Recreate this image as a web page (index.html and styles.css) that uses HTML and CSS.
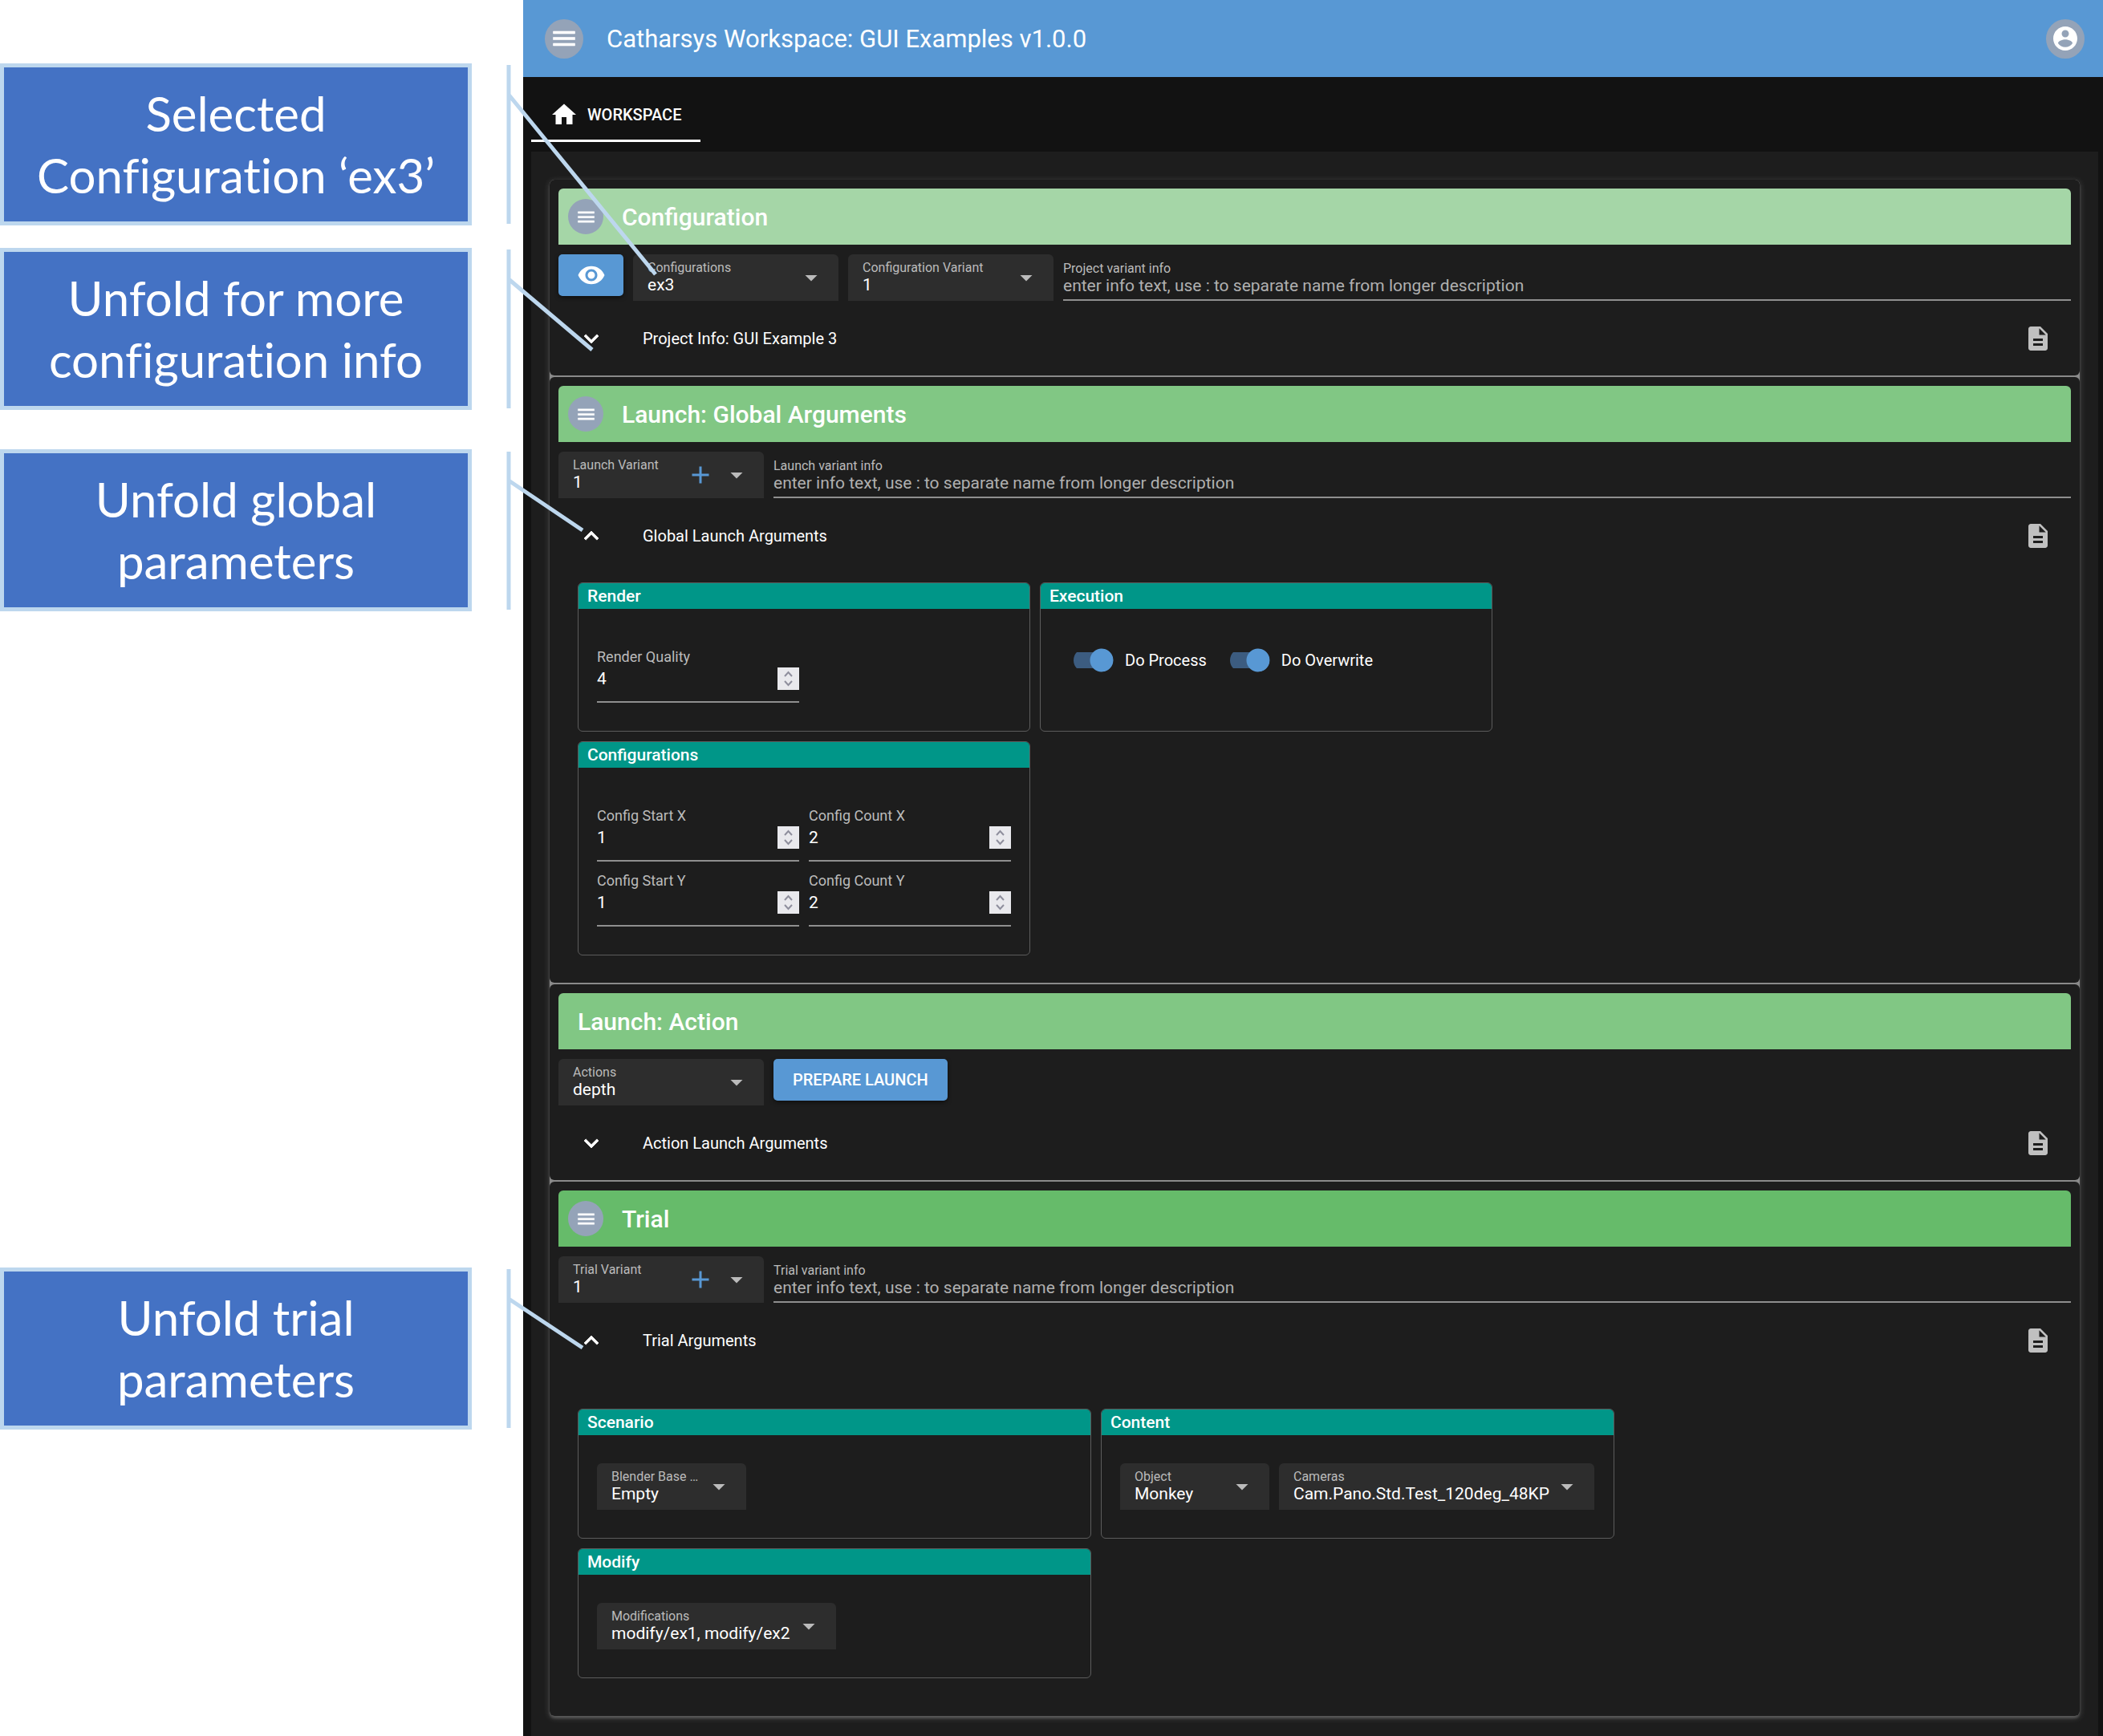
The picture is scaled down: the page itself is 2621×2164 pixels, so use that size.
FILE: index.html
```html
<!DOCTYPE html>
<html lang="en">
<head>
<meta charset="utf-8">
<title>Catharsys Workspace</title>
<link rel="stylesheet" href="styles.css">
</head>
<body>
<svg class="sprite" aria-hidden="true">
  <symbol id="menu" viewBox="0 0 24 24"><path d="M3 18h18v-2H3v2zm0-5h18v-2H3v2zm0-7v2h18V6H3z" stroke="currentColor" stroke-width=".4"/></symbol>
  <symbol id="account" viewBox="0 0 24 24"><path d="M12 2C6.48 2 2 6.48 2 12s4.48 10 10 10 10-4.48 10-10S17.52 2 12 2zm0 3c1.66 0 3 1.34 3 3s-1.34 3-3 3-3-1.34-3-3 1.34-3 3-3zm0 14.2c-2.5 0-4.71-1.28-6-3.22.03-1.99 4-3.08 6-3.08 1.99 0 5.97 1.09 6 3.08-1.29 1.94-3.5 3.22-6 3.22z"/></symbol>
  <symbol id="home" viewBox="0 0 24 24"><path d="M10 20v-6h4v6h5v-8h3L12 3 2 12h3v8z"/></symbol>
  <symbol id="eye" viewBox="0 0 24 24"><path d="M12 4.500C7 4.500 2.730 7.610 1 12c1.730 4.390 6 7.500 11 7.500s9.270-3.110 11-7.500c-1.730-4.390-6-7.500-11-7.500zM12 17c-2.760 0-5-2.240-5-5s2.240-5 5-5 5 2.240 5 5-2.240 5-5 5zm0-8c-1.660 0-3 1.340-3 3s1.340 3 3 3 3-1.340 3-3-1.340-3-3-3z"/></symbol>
  <symbol id="down" viewBox="0 0 24 24"><path d="M7.410 8.590 12 13.170l4.590-4.580L18 10l-6 6-6-6z" stroke="currentColor" stroke-width=".5"/></symbol>
  <symbol id="up" viewBox="0 0 24 24"><path d="M7.410 15.410 12 10.830l4.590 4.580L18 14l-6-6-6 6z" stroke="currentColor" stroke-width=".5"/></symbol>
  <symbol id="doc" viewBox="0 0 24 24"><path d="M14 2H6c-1.100 0-1.990.9-1.990 2L4 20c0 1.100.890 2 1.990 2H18c1.100 0 2-.9 2-2V8l-6-6zm2 16H8v-2h8v2zm0-4H8v-2h8v2zm-3-5V3.500L18.500 9H13z"/></symbol>
  <symbol id="caret" viewBox="0 0 24 24"><path d="M7 10l5 5 5-5z"/></symbol>
  <symbol id="plus" viewBox="0 0 24 24"><path d="M19 13h-6v6h-2v-6H5v-2h6V5h2v6h6v2z"/></symbol>
  <symbol id="spin" viewBox="0 0 27 28"><path d="M9 11l4.500-5 4.500 5M9 17l4.500 5 4.500-5" fill="none" stroke="#8f8f9d" stroke-width="2"/></symbol>
</svg>

<div class="page">
  <aside class="notes">
    <p class="note">Selected<br>Configuration ‘ex3’</p>
    <p class="note">Unfold for more<br>configuration info</p>
    <p class="note note-global">Unfold global<br>parameters</p>
    <p class="note note-trial">Unfold trial<br>parameters</p>
  </aside>

  <div class="app">
    <header class="topbar">
      <button class="round" type="button" aria-label="Menu"><svg class="icon"><use href="#menu"/></svg></button>
      <h1 class="app-title">Catharsys Workspace: GUI Examples v1.0.0</h1>
      <button class="round" type="button" aria-label="Account"><svg class="icon"><use href="#account"/></svg></button>
    </header>

    <nav class="tabs">
      <a class="tab" href="#workspace"><svg class="icon"><use href="#home"/></svg>WORKSPACE</a>
    </nav>

    <main class="panel" id="workspace">
      <div class="stack">

        <section class="section">
          <header class="bar bar-light">
            <button class="round round-small" type="button" aria-label="Configuration menu"><svg class="icon icon-small"><use href="#menu"/></svg></button>
            <h2 class="bar-title">Configuration</h2>
          </header>
          <div class="row">
            <button class="btn btn-eye" type="button" aria-label="View"><svg class="icon"><use href="#eye"/></svg></button>
            <div class="select">
              <div class="select-main"><label for="cfg">Configurations</label><select id="cfg"><option>ex3</option></select></div>
              <svg class="icon"><use href="#caret"/></svg>
            </div>
            <div class="select">
              <div class="select-main"><label for="cfgv">Configuration Variant</label><select id="cfgv"><option>1</option></select></div>
              <svg class="icon"><use href="#caret"/></svg>
            </div>
            <div class="info"><label for="pinfo">Project variant info</label><input id="pinfo" type="text" placeholder="enter info text, use : to separate name from longer description"></div>
          </div>
          <div class="fold">
            <button class="fold-toggle" type="button"><svg class="icon"><use href="#down"/></svg>Project Info: GUI Example 3</button>
            <svg class="icon doc"><use href="#doc"/></svg>
          </div>
        </section>

        <section class="section">
          <header class="bar bar-mid">
            <button class="round round-small" type="button" aria-label="Launch menu"><svg class="icon icon-small"><use href="#menu"/></svg></button>
            <h2 class="bar-title">Launch: Global Arguments</h2>
          </header>
          <div class="row">
            <div class="select">
              <div class="select-main"><label for="lv">Launch Variant</label><select id="lv"><option>1</option></select></div>
              <button class="add" type="button" aria-label="Add launch variant"><svg class="icon"><use href="#plus"/></svg></button>
              <svg class="icon"><use href="#caret"/></svg>
            </div>
            <div class="info"><label for="linfo">Launch variant info</label><input id="linfo" type="text" placeholder="enter info text, use : to separate name from longer description"></div>
          </div>
          <div class="fold">
            <button class="fold-toggle" type="button"><svg class="icon"><use href="#up"/></svg>Global Launch Arguments</button>
            <svg class="icon doc"><use href="#doc"/></svg>
          </div>
          <div class="groups">
            <div class="group">
              <h3 class="group-title">Render</h3>
              <div class="group-body numbers">
                <div class="number"><label for="rq">Render Quality</label><div class="number-line"><input id="rq" type="number" value="4"><svg class="spin"><use href="#spin"/></svg></div></div>
              </div>
            </div>
            <div class="group">
              <h3 class="group-title">Execution</h3>
              <div class="group-body switches">
                <label class="switch"><input type="checkbox" checked>Do Process</label>
                <label class="switch"><input type="checkbox" checked>Do Overwrite</label>
              </div>
            </div>
            <div class="group">
              <h3 class="group-title">Configurations</h3>
              <div class="group-body numbers">
                <div class="number"><label for="sx">Config Start X</label><div class="number-line"><input id="sx" type="number" value="1"><svg class="spin"><use href="#spin"/></svg></div></div>
                <div class="number"><label for="cx">Config Count X</label><div class="number-line"><input id="cx" type="number" value="2"><svg class="spin"><use href="#spin"/></svg></div></div>
                <div class="number"><label for="sy">Config Start Y</label><div class="number-line"><input id="sy" type="number" value="1"><svg class="spin"><use href="#spin"/></svg></div></div>
                <div class="number"><label for="cy">Config Count Y</label><div class="number-line"><input id="cy" type="number" value="2"><svg class="spin"><use href="#spin"/></svg></div></div>
              </div>
            </div>
          </div>
        </section>

        <section class="section">
          <header class="bar bar-mid">
            <h2 class="bar-title bar-title-plain">Launch: Action</h2>
          </header>
          <div class="row">
            <div class="select">
              <div class="select-main"><label for="act">Actions</label><select id="act"><option>depth</option></select></div>
              <svg class="icon"><use href="#caret"/></svg>
            </div>
            <button class="btn" type="button">PREPARE LAUNCH</button>
          </div>
          <div class="fold">
            <button class="fold-toggle" type="button"><svg class="icon"><use href="#down"/></svg>Action Launch Arguments</button>
            <svg class="icon doc"><use href="#doc"/></svg>
          </div>
        </section>

        <section class="section">
          <header class="bar bar-deep">
            <button class="round round-small" type="button" aria-label="Trial menu"><svg class="icon icon-small"><use href="#menu"/></svg></button>
            <h2 class="bar-title">Trial</h2>
          </header>
          <div class="row">
            <div class="select">
              <div class="select-main"><label for="tv">Trial Variant</label><select id="tv"><option>1</option></select></div>
              <button class="add" type="button" aria-label="Add trial variant"><svg class="icon"><use href="#plus"/></svg></button>
              <svg class="icon"><use href="#caret"/></svg>
            </div>
            <div class="info"><label for="tinfo">Trial variant info</label><input id="tinfo" type="text" placeholder="enter info text, use : to separate name from longer description"></div>
          </div>
          <div class="fold">
            <button class="fold-toggle" type="button"><svg class="icon"><use href="#up"/></svg>Trial Arguments</button>
            <svg class="icon doc"><use href="#doc"/></svg>
          </div>
          <div class="groups groups-wide">
            <div class="group">
              <h3 class="group-title">Scenario</h3>
              <div class="group-body picks">
                <div class="select select-s">
                  <div class="select-main"><label for="bl">Blender Base …</label><select id="bl"><option>Empty</option></select></div>
                  <svg class="icon"><use href="#caret"/></svg>
                </div>
              </div>
            </div>
            <div class="group">
              <h3 class="group-title">Content</h3>
              <div class="group-body picks">
                <div class="select select-s">
                  <div class="select-main"><label for="ob">Object</label><select id="ob"><option>Monkey</option></select></div>
                  <svg class="icon"><use href="#caret"/></svg>
                </div>
                <div class="select select-l">
                  <div class="select-main"><label for="cam">Cameras</label><select id="cam"><option>Cam.Pano.Std.Test_120deg_48KP</option></select></div>
                  <svg class="icon"><use href="#caret"/></svg>
                </div>
              </div>
            </div>
            <div class="group">
              <h3 class="group-title">Modify</h3>
              <div class="group-body picks">
                <div class="select select-m">
                  <div class="select-main"><label for="mod">Modifications</label><select id="mod"><option>modify/ex1, modify/ex2</option></select></div>
                  <svg class="icon"><use href="#caret"/></svg>
                </div>
              </div>
            </div>
          </div>
        </section>

      </div>
    </main>
  </div>

  <!-- Leader lines from the notes to the controls they explain -->
  <svg class="leaders" width="840" height="1800" viewBox="0 0 840 1800" aria-hidden="true">
    <path d="M634 81V279M634 118L817 342M634 311V509M634 348L738 436M634 563V760M634 599L726 661M634 1582V1780M634 1619L726 1680"/>
  </svg>
</div>
</body>
</html>
```
FILE: styles.css
```css
* { box-sizing: border-box; }

body {
  margin: 0;
  background: #fff;
  color: #fff;
  font: 400 21px/24px Roboto, sans-serif;
}

h1, h2, h3, p { margin: 0; }

button, input, select {
  margin: 0;
  padding: 0;
  border: 0;
  background: none;
  color: inherit;
  font: inherit;
  appearance: none;
}

.sprite { display: none; }

.icon {
  flex: none;
  width: 36px;
  height: 36px;
  fill: currentColor;
}

.icon-small { width: 27px; height: 27px; }

.page {
  position: relative;
  display: flex;
  min-height: 100vh;
}

/* Notes beside the application */
.notes {
  flex: none;
  width: 652px;
  padding-top: 79px;
}

.note {
  display: flex;
  align-items: center;
  justify-content: center;
  width: 588px;
  height: 202px;
  margin-bottom: 28px;
  border: 5px solid #bdd7ee;
  background: #4472c4;
  font: 400 60px/77px Lato, sans-serif;
  font-variant-ligatures: none;
  text-align: center;
}

.note-global { margin-top: 49px; }
.note-trial { margin-top: 818px; }

.leaders {
  position: absolute;
  top: 0;
  left: 0;
  fill: none;
  stroke: #bdd7ee;
  stroke-width: 5px;
  pointer-events: none;
}

/* Application frame */
.app {
  flex: 1;
  min-width: 0;
  display: flex;
  flex-direction: column;
  background: #121212;
}

.topbar {
  display: flex;
  align-items: center;
  height: 96px;
  padding: 0 23px 0 27px;
  background: #5898d4;
}

.app-title {
  flex: 1;
  padding: 2px 0 0 29px;
  font-size: 31px;
  font-weight: 400;
  line-height: 40px;
}

.round {
  display: flex;
  flex: none;
  align-items: center;
  justify-content: center;
  width: 48px;
  height: 49px;
  border-radius: 50%;
  background: #94a3b8;
}

.round-small { width: 44px; height: 44px; }

.tabs {
  display: flex;
  padding: 9px 10px 12px;
}

.tab {
  display: flex;
  align-items: center;
  gap: 11px;
  height: 72px;
  padding: 3px 24px 0 23px;
  box-shadow: inset 0 -3px #fff;
  color: #fff;
  font-size: 20px;
  font-weight: 500;
  text-decoration: none;
}

.panel {
  flex: 1;
  margin: 0 6px 0 10px;
  padding: 35px 23px 24px;
  background: #1d1d1d;
}

.stack {
  display: flex;
  flex-direction: column;
  gap: 2px;
  border-radius: 6px;
  background: #8a8a8a;
  box-shadow: 0 2px 8px rgba(255, 255, 255, .2), 0 3px 3px rgba(255, 255, 255, .16);
}

.section {
  padding: 11px;
  border-radius: 6px;
  background: #1d1d1d;
}

.bar {
  display: flex;
  align-items: center;
  height: 70px;
  padding-left: 12px;
  border-radius: 6px 6px 0 0;
}

.bar-light { background: #a5d6a7; }
.bar-mid { background: #81c784; }
.bar-deep { background: #66bb6a; }

.bar-title {
  padding: 2px 0 0 23px;
  font-size: 30px;
  font-weight: 500;
  line-height: 36px;
}

.bar-title-plain { padding-left: 12px; }

.row {
  display: flex;
  gap: 12px;
  padding: 12px 0;
}

.btn {
  height: 52px;
  padding: 0 24px;
  border-radius: 5px;
  background: #5898d4;
  box-shadow: 0 2px 5px rgba(0, 0, 0, .5);
  font-size: 20px;
  font-weight: 500;
}

.btn-eye {
  display: flex;
  align-items: center;
  justify-content: center;
  width: 81px;
}

/* Filled drop-down */
.select {
  display: flex;
  flex: none;
  align-items: center;
  gap: 9px;
  width: 256px;
  height: 58px;
  padding: 0 16px 0 18px;
  border-radius: 6px 6px 0 0;
  background: #2d2d2d;
  color: #bbb;
}

.select-s { width: 186px; gap: 0; }
.select-m { width: 298px; gap: 0; }
.select-l { width: 393px; gap: 0; }

.select-main {
  display: flex;
  flex: 1;
  flex-direction: column;
  min-width: 0;
}

.select label,
.info label {
  font-size: 16px;
  line-height: 18px;
  white-space: nowrap;
}

.select select {
  height: 24px;
  color: #fff;
}

.add {
  display: flex;
  color: #5898d4;
}

.info {
  display: flex;
  flex: 1;
  flex-direction: column;
  height: 58px;
  padding-top: 9px;
  border-bottom: 2px solid #8f8f8f;
  color: #bbb;
}

.info input { height: 24px; }
.info input::placeholder { color: #b0b0b0; opacity: 1; }

.fold {
  display: flex;
  align-items: center;
  justify-content: space-between;
  height: 70px;
  padding: 0 23px;
}

.fold-toggle {
  display: flex;
  align-items: center;
  gap: 46px;
  font-size: 20px;
}

.doc { color: #c0c0c0; }

/* Argument groups */
.groups {
  display: grid;
  grid-template-columns: repeat(2, 564px);
  gap: 12px;
  padding: 23px 24px;
}

.groups-wide {
  grid-template-columns: repeat(2, 640px);
  padding: 50px 24px 36px;
}

.group {
  overflow: hidden;
  border: 1px solid #5c5c5c;
  border-radius: 6px;
}

.group-title {
  height: 32px;
  padding-left: 11px;
  background: #009688;
  font-size: 21px;
  font-weight: 500;
  line-height: 32px;
}

.group-body { padding: 35px 23px; }

.numbers {
  display: grid;
  grid-template-columns: repeat(2, minmax(0, 1fr));
  gap: 11px 12px;
  padding-top: 47px;
}

.number {
  height: 70px;
  border-bottom: 2px solid #8f8f8f;
}

.number label {
  display: block;
  color: #bbb;
  font-size: 18px;
  line-height: 26px;
}

.number-line {
  display: flex;
  align-items: center;
}

.number input {
  flex: 1;
  min-width: 0;
  height: 28px;
  appearance: textfield;
}

.number input::-webkit-inner-spin-button { appearance: none; }

.spin {
  flex: none;
  width: 27px;
  height: 28px;
  background: #e9e9ed;
}

.switches {
  display: flex;
  gap: 29px;
  padding-left: 41px;
}

.switch {
  display: flex;
  align-items: center;
  gap: 14px;
  height: 58px;
  font-size: 20px;
}

.switch input {
  width: 50px;
  height: 30px;
  border-radius: 15px;
  background:
    radial-gradient(circle at 35px 15px, #5898d4 14px, transparent 15px),
    linear-gradient(#3c5c80, #3c5c80) 0 5px / 40px 20px no-repeat;
  clip-path: inset(0 round 10px 15px 15px 10px);
}

.picks {
  display: flex;
  gap: 12px;
}
```
